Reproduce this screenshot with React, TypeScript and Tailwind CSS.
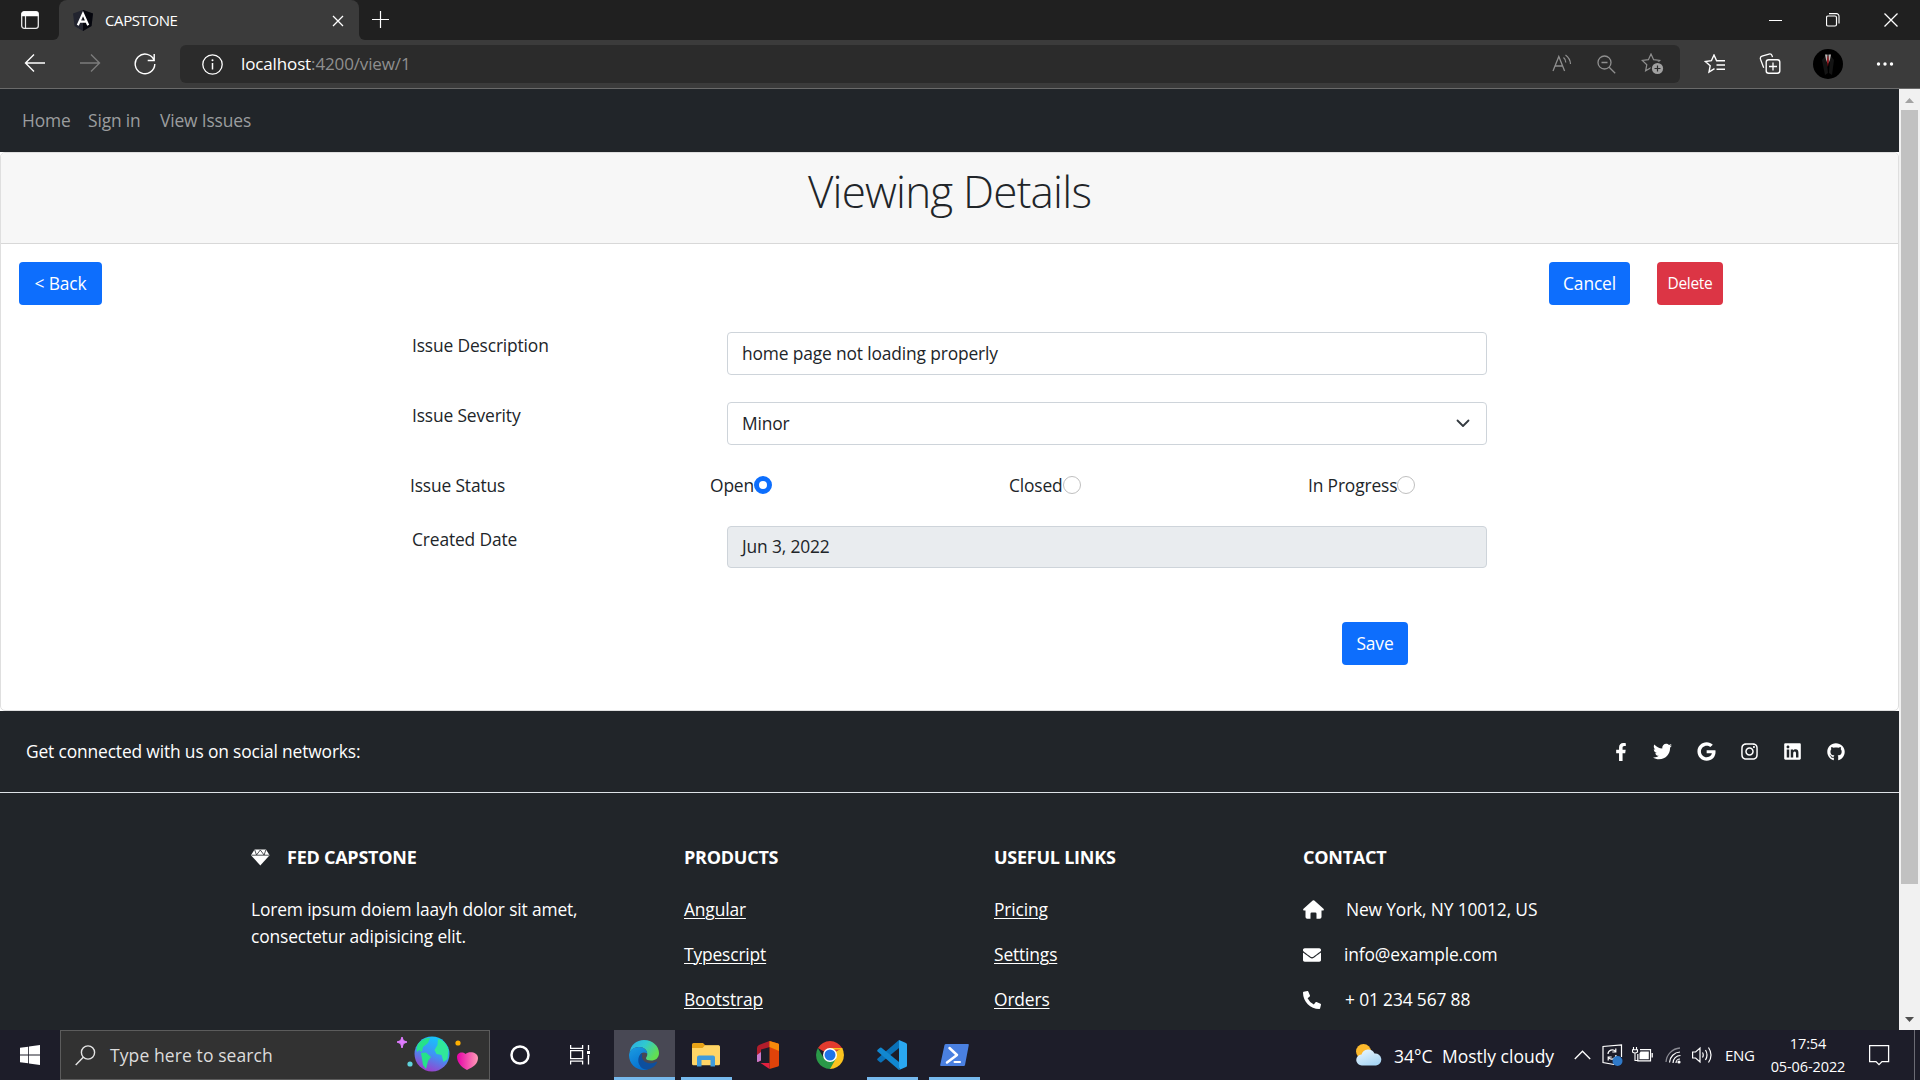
import React from "react";
import {
  FaFacebookF,
  FaTwitter,
  FaGoogle,
  FaInstagram,
  FaLinkedin,
  FaGithub,
  FaEnvelope,
  FaPhoneAlt,
} from "react-icons/fa";

/* ---------- Browser chrome ---------- */

function TitleBar() {
  return (
    <div className="flex h-10 bg-[#3b3b3b] text-white">
      <div className="flex h-10 w-[59px] items-center justify-center rounded-br-md bg-[#202020]">
        <svg width="20" height="20" viewBox="0 0 20 20" fill="none">
          <rect x="1.7" y="1.7" width="16.6" height="16.6" rx="2.5" stroke="#e8e8e8" strokeWidth="1.3" />
          <path d="M1.5 4a2.5 2.5 0 0 1 2.500-2.500h12A2.500 2.500 0 0 1 18.500 4v2.200h-17z" fill="#fff" />
          <path d="M5.500 6v12" stroke="#e8e8e8" strokeWidth="1.200" />
        </svg>
      </div>
      <div className="flex w-[300px] bg-[#202020]">
        <div className="flex h-10 w-[300px] items-center rounded-t-lg bg-[#3b3b3b] pl-[14px]">
          <svg width="20" height="21" viewBox="0 0 20 21">
            <path d="M10 0L20 3.500 18.500 16 10 21 1.500 16 0 3.500z" fill="#22242f" />
            <path d="M10 0L20 3.500 18.500 16 10 21z" fill="#05060d" />
            <path d="M4.800 15.200L10 3.600l5.200 11.600M7 11.600h6" stroke="#fff" strokeWidth="2.200" fill="none" />
          </svg>
          <span className="ml-[12px] text-[15px] leading-5 tracking-[-0.4px]">CAPSTONE</span>
          <svg width="12" height="12" viewBox="0 0 12 12" className="ml-auto mr-[15px] mt-[1px]">
            <path d="M1 1l10 10M11 1L1 11" stroke="#fff" strokeWidth="1.300" />
          </svg>
        </div>
      </div>
      <div className="flex flex-1 rounded-bl-md bg-[#202020]">
        <svg width="18" height="18" viewBox="0 0 18 18" className="ml-[13px] mt-[11px]">
          <path d="M8.500 0v17M0 8.500h17" stroke="#fff" strokeWidth="1.200" />
        </svg>
        <div className="ml-auto flex items-center pr-[22px]">
          <svg width="14" height="14" viewBox="0 0 14 14">
            <path d="M0 7.500h13" stroke="#fff" />
          </svg>
          <svg width="14" height="14" viewBox="0 0 14 14" fill="none" className="ml-[43px]">
            <rect x="0.500" y="3" width="10" height="10" rx="1.500" stroke="#fff" strokeWidth="1.200" />
            <path d="M3 .6h7.500a2.500 2.500 0 0 1 2.500 2.500v7.500" stroke="#fff" strokeWidth="1.100" />
          </svg>
          <svg width="14" height="14" viewBox="0 0 14 14" className="ml-[44px]">
            <path d="M.5.5l13 13M13.500.5l-13 13" stroke="#fff" strokeWidth="1.300" />
          </svg>
        </div>
      </div>
    </div>
  );
}

const star = "M10 1l2.600 5.700 6.100.8-4.500 4.200 1.200 6.100L10 14.800l-5.400 3 1.200-6.100L1.300 7.500l6.100-.8z";

function Toolbar() {
  return (
    <div className="flex h-12 items-center bg-[#3b3b3b] text-white">
      <svg width="22" height="20" viewBox="0 0 22 20" fill="none" className="ml-[24px] mt-[-2px]">
        <path d="M21 10H1.500M10 1.500L1.500 10l8.500 8.500" stroke="#fff" strokeWidth="1.400" />
      </svg>
      <svg width="22" height="20" viewBox="0 0 22 20" fill="none" className="ml-[33px] mt-[-2px]">
        <path d="M1 10h19.500M12 1.500l8.500 8.500-8.500 8.500" stroke="#7c7c7c" strokeWidth="1.400" />
      </svg>
      <svg width="22" height="22" viewBox="0 0 22 22" fill="none" className="ml-[33px]">
        <path d="M20.200 7.500A9.800 9.800 0 1 0 20.800 11M20.200 1v6.500h-6.500" stroke="#fff" strokeWidth="1.400" />
      </svg>
      <div className="ml-[24px] flex h-[38px] w-[1500px] items-center rounded-md bg-[#2b2b2b] pl-[22px] pr-[16px]">
        <svg width="21" height="21" viewBox="0 0 21 21" fill="none">
          <circle cx="10.500" cy="10.500" r="9.700" stroke="#fff" strokeWidth="1.300" />
          <path d="M10.500 9v6.500" stroke="#fff" strokeWidth="1.500" />
          <circle cx="10.500" cy="6.300" r="1" fill="#fff" />
        </svg>
        <span className="ml-[18px] text-[17px] leading-6 tracking-[-0.13px]">
          localhost<span className="text-[#8f8f8f]">:4200/view/1</span>
        </span>
        <svg width="20" height="18" viewBox="0 0 20 18" fill="none" className="ml-auto mb-[2px]">
          <path d="M1 17L6.800 2.500 12.600 17M3 12h7.700" stroke="#8f8f8f" strokeWidth="1.300" />
          <path d="M11.500 3.500c1.500 1.200 2.300 3 2.300 5M13.500 1c2.800 2 4.800 5 5 9" stroke="#8f8f8f" strokeWidth="1.200" />
        </svg>
        <svg width="19" height="19" viewBox="0 0 19 19" fill="none" className="ml-[25px]">
          <circle cx="7.500" cy="7.500" r="6.500" stroke="#8f8f8f" strokeWidth="1.300" />
          <path d="M4.500 7.500h6M12.200 12.200l6 6" stroke="#8f8f8f" strokeWidth="1.300" />
        </svg>
        <svg width="23" height="22" viewBox="0 0 23 22" fill="none" className="ml-[25px]">
          <path d={star} stroke="#8f8f8f" strokeWidth="1.200" />
          <circle cx="16.500" cy="15.500" r="7" fill="#2b2b2b" />
          <circle cx="16.500" cy="15.500" r="5.600" fill="#a0a0a0" />
          <path d="M16.500 12.500v6M13.500 15.500h6" stroke="#2b2b2b" strokeWidth="1.200" />
        </svg>
      </div>
      <svg width="22" height="20" viewBox="0 0 22 20" fill="none" className="ml-[24px]">
        <path d="M10.500 14.700L5 18l1.200-6.300-4.900-4.200 6.100-.8L10 1l2.600 5.700h8.400M12.500 11H21M12.500 15.200H21" stroke="#fff" strokeWidth="1.400" />
      </svg>
      <svg width="22" height="22" viewBox="0 0 22 22" fill="none" className="ml-[33px]">
        <path d="M4.700 14.800L1.500 6.300A2.500 2.500 0 0 1 3 3.200L10 1.100a2.500 2.500 0 0 1 3 1.500l.5 1.500" stroke="#fff" strokeWidth="1.300" />
        <rect x="7.200" y="6.700" width="13.600" height="13.600" rx="2.500" stroke="#fff" strokeWidth="1.400" />
        <path d="M14 9.500v8M10 13.500h8" stroke="#fff" strokeWidth="1.300" />
      </svg>
      <svg width="30" height="30" viewBox="0 0 30 30" className="ml-[32px]">
        <circle cx="15" cy="15" r="15" fill="#000" />
        <path d="M9 11l4-5 2 18-3 2zM21 11l-4-5-1 18 3 2z" fill="#141414" />
        <path d="M12 5.500l1 5 1.500 4v-9zM18 5.500l-1 5-1.500 4v-9z" fill="#b9b4b4" />
        <path d="M14.600 7l-.6 5 .9 6 .9-6-.5-5z" fill="#a3141c" />
      </svg>
      <svg width="18" height="6" viewBox="0 0 18 6" fill="#fff" className="ml-[33px]">
        <circle cx="2.500" cy="3" r="1.700" />
        <circle cx="9" cy="3" r="1.700" />
        <circle cx="15.500" cy="3" r="1.700" />
      </svg>
    </div>
  );
}

/* ---------- Page ---------- */

function IssueForm() {
  const status = [
    { label: "Open", checked: true },
    { label: "Closed", checked: false },
    { label: "In Progress", checked: false },
  ];
  return (
    <main className="h-[559px] rounded-[5px] border border-[#dfdfdf] bg-white">
      <header className="flex h-[91px] justify-center rounded-t-[4px] border-b border-[#d8d8d8] bg-[#f7f7f7] pt-[8px]">
        <h1 className="text-[44px] font-light leading-[60px] tracking-[-0.8px]">Viewing Details</h1>
      </header>
      <div className="flex h-[61px] pl-[18px] pt-[18px] text-white">
        <button className="h-[43px] w-[83px] rounded bg-[#0d6efd]">&lt; Back</button>
        <button className="ml-[1447px] h-[43px] w-[81px] rounded bg-[#0d6efd]">Cancel</button>
        <button className="ml-[27px] h-[43px] w-[66px] rounded bg-[#dc3545] text-[15.5px] tracking-[-0.3px]">Delete</button>
      </div>
      <div className="flex flex-col gap-[27px] pl-[411px] pt-[27px]">
        <label className="flex">
          <span className="w-[315px]">Issue Description</span>
          <span className="flex h-[43px] w-[760px] items-center rounded border border-[#ced4da] px-[14px]">
            home page not loading properly
          </span>
        </label>
        <label className="flex">
          <span className="w-[315px]">Issue Severity</span>
          <span className="flex h-[43px] w-[760px] items-center justify-between rounded border border-[#ced4da] pl-[14px] pr-[16px]">
            Minor
            <svg width="14" height="9" viewBox="0 0 14 9" fill="none">
              <path d="M1.500 1.500L7 7l5.500-5.500" stroke="#343a40" strokeWidth="1.800" strokeLinecap="round" strokeLinejoin="round" />
            </svg>
          </span>
        </label>
        <div className="flex h-[27px]">
          <span className="ml-[-2px] w-[300px]">Issue Status</span>
          {status.map((s) => (
            <label key={s.label} className="flex w-[299px]">
              {s.label}
              {s.checked ? (
                <span className="mt-[4px] size-[18px] rounded-full border-[5px] border-[#0d6efd] bg-white" />
              ) : (
                <span className="mt-[4px] size-[18px] rounded-full border border-[#bfbfbf] bg-white" />
              )}
            </label>
          ))}
        </div>
        <label className="flex">
          <span className="w-[315px]">Created Date</span>
          <span className="flex h-[42px] w-[760px] items-center rounded border border-[#ced4da] bg-[#e9ecef] px-[14px] pb-[1px]">
            Jun 3, 2022
          </span>
        </label>
      </div>
      <button className="ml-[1341px] mt-[54px] h-[43px] w-[66px] rounded bg-[#0d6efd] text-white">Save</button>
    </main>
  );
}

function ColumnTitle({ children }: { children: React.ReactNode }) {
  return (
    <h6 className="flex items-center text-[18px] font-bold leading-[27px] tracking-[-0.25px]">{children}</h6>
  );
}

function LinkColumn({ title, links, width }: { title: string; links: string[]; width: string }) {
  return (
    <div className={width}>
      <ColumnTitle>{title}</ColumnTitle>
      <ul className="mt-[25px] flex flex-col gap-[18px]">
        {links.map((l) => (
          <li key={l} className="h-[27px] underline decoration-1 underline-offset-2">{l}</li>
        ))}
      </ul>
    </div>
  );
}

function GemIcon() {
  return (
    <svg width="19" height="17" viewBox="0 0 19 17" fill="#fff" className="mr-[17px]">
      <path d="M3.600 .5H15L18.600 6.300 9.300 16.500 0 6.300z" />
      <path d="M.5 6.200H18.200M5.500 6L9.300 1l3.800 5M3.700.8L5.500 6M14.900.8L13.100 6" stroke="#212529" strokeWidth="0.800" fill="none" />
    </svg>
  );
}

function HouseIcon() {
  return (
    <svg width="21" height="19" viewBox="0 0 21 19" fill="#fff" className="mr-[22px]">
      <path d="M9.700.5q.8-.7 1.600 0l9.200 8.200q.5.600.3 1.200-.3.600-1 .6h-1.300V17q0 1.700-1.700 1.700h-3.300v-4.900q0-1.200-1.200-1.200H8.700q-1.200 0-1.200 1.200v4.900H4.200q-1.700 0-1.700-1.700v-6.500H1.200q-.7 0-1-.6-.2-.6.300-1.200z" />
    </svg>
  );
}

function Footer() {
  return (
    <footer className="h-[319px] overflow-hidden bg-[#212529] text-white">
      <div className="flex h-[82px] items-center border-b border-[#dee2e6] pl-[26px] pr-[54px]">
        <span>Get connected with us on social networks:</span>
        <div className="ml-auto flex items-center">
          <FaFacebookF size={18} className="mr-[23px]" />
          <FaTwitter size={19} className="mr-[25px]" />
          <FaGoogle size={19} className="mr-[24px]" />
          <FaInstagram size={19} className="mr-[24px]" />
          <FaLinkedin size={19} className="mr-[25px]" />
          <FaGithub size={18} />
        </div>
      </div>
      <div className="flex pl-[251px] pt-[51px]">
        <div className="w-[433px]">
          <ColumnTitle>
            <GemIcon />
            FED CAPSTONE
          </ColumnTitle>
          <p className="mt-[25px] w-[345px]">Lorem ipsum doiem laayh dolor sit amet, consectetur adipisicing elit.</p>
        </div>
        <LinkColumn width="w-[310px]" title="PRODUCTS" links={["Angular", "Typescript", "Bootstrap"]} />
        <LinkColumn width="w-[309px]" title="USEFUL LINKS" links={["Pricing", "Settings", "Orders"]} />
        <div>
          <ColumnTitle>CONTACT</ColumnTitle>
          <div className="mt-[25px] flex flex-col gap-[18px]">
            <p className="flex h-[27px] items-center"><HouseIcon />New York, NY 10012, US</p>
            <p className="flex h-[27px] items-center"><FaEnvelope size={18} className="mr-[23px]" />info@example.com</p>
            <p className="flex h-[27px] items-center"><FaPhoneAlt size={18} className="mr-[24px]" />+ 01 234 567 88</p>
          </div>
        </div>
      </div>
    </footer>
  );
}

function ScrollBar() {
  return (
    <div className="flex w-[21px] flex-col items-center bg-[#f1f1f1]">
      <svg width="9" height="5" viewBox="0 0 9 5" className="mt-[9px]">
        <path d="M4.500 0L9 5H0z" fill="#a3a3a3" />
      </svg>
      <div className="mt-[7px] h-[774px] w-[17px] bg-[#c1c1c1]" />
      <svg width="9" height="5" viewBox="0 0 9 5" className="mt-auto mb-[8px]">
        <path d="M0 0h9L4.500 5z" fill="#505050" />
      </svg>
    </div>
  );
}

/* ---------- Taskbar ---------- */

function SearchArt() {
  return (
    <svg width="86" height="40" viewBox="0 0 86 40">
      <defs>
        <linearGradient id="globe" x1="0.700" y1="0" x2="0.300" y2="1">
          <stop offset="0" stopColor="#12c9fb" />
          <stop offset="0.500" stopColor="#3f93f5" />
          <stop offset="1" stopColor="#a338c8" />
        </linearGradient>
        <linearGradient id="heart" x1="0" y1="0" x2="1" y2="0">
          <stop offset="0" stopColor="#e600a8" />
          <stop offset="1" stopColor="#ff9bb5" />
        </linearGradient>
      </defs>
      <path d="M6 2l1.400 3.600L11 7l-3.600 1.600L6 13l-1.400-4.400L1 7l3.600-1.400z" fill="#e07bff" stroke="#e07bff" strokeWidth="1" />
      <circle cx="14" cy="29" r="2.600" fill="#5fd3dc" />
      <circle cx="36" cy="19" r="17.500" fill="url(#globe)" />
      <path d="M22 9c4-5 8-6 12-6l-2 5-5 4-1 5-3-2-2 2c-1-3 0-6 1-8zM25 18l5-.5 5 4.500-3 4-2 8-3-4-1-6z" fill="#25e28a" />
      <path d="M42 4c6 1 9 6 10.500 11l-1 9-4 3-2-7-5-1-2-4 3-5z" fill="#30e79a" />
      <circle cx="62" cy="8" r="2.600" fill="#ffb000" />
      <path d="M71 35c-6-3-10-8-10-13 0-4 5-6 8.500-3 3.500-3.500 12.500-2 12.500 4 0 6-5 9-11 12z" fill="url(#heart)" />
    </svg>
  );
}

function EdgeIcon() {
  return (
    <svg width="30" height="30" viewBox="0 0 30 30" className="mr-px">
      <defs>
        <linearGradient id="edgeTop" x1="0" y1="0" x2="1" y2="0.500">
          <stop offset="0" stopColor="#2aa8e8" />
          <stop offset="0.500" stopColor="#30c8d0" />
          <stop offset="1" stopColor="#62df52" />
        </linearGradient>
        <linearGradient id="edgeLeft" x1="0" y1="0" x2="0.500" y2="1">
          <stop offset="0" stopColor="#1b9de2" />
          <stop offset="1" stopColor="#0670cf" />
        </linearGradient>
      </defs>
      <path d="M.5 13C1.500 5 7.500 0 15 0c8.500 0 15 6 15 13 0 5-3.500 7.500-8 7.500-3 0-5-1-5-2.300 0-1 1.300-1.500 1.300-4C18.300 10 15 7 10 7 5.500 7 2 9.500.5 13z" fill="url(#edgeTop)" />
      <path d="M0 15C.5 10 5 7 10 7c5 0 8.300 3.500 8.300 6.500-5-3-8.300.5-8.300 5.500 0 5 4 9.500 9 10.500-1 .4-2.500.5-4 .5C6.500 30 0 23.500 0 15z" fill="url(#edgeLeft)" />
      <path d="M13 13.500C9.500 15 8.500 20 10 24c1.600 4 5 6 8.500 5.600C23 28.500 26.500 26 28 22.500c.3-.8-.3-1-1-.6-6 3.200-14 .5-14-5.400 0-1.200.3-2.200 0-3z" fill="#0d4f9e" />
    </svg>
  );
}

function ExplorerIcon() {
  return (
    <svg width="28" height="24" viewBox="0 0 28 24" className="mr-px">
      <path d="M0 1.500Q0 0 1.500 0h9.500l2.500 2.500H27V12H0z" fill="#e8a317" />
      <path d="M0 5h10.500L13 2.200h13.500Q28 2.200 28 3.700v17q0 1.500-1.500 1.500h-25Q0 22.200 0 20.700z" fill="#ffd566" />
      <path d="M5 23.500v-9q0-2 2-2h14q2 0 2 2v9h-4.500V17h-9v6.500z" fill="#3f9bdc" />
    </svg>
  );
}

function OfficeIcon() {
  return (
    <svg width="24" height="28" viewBox="0 0 24 28">
      <path d="M13.500 0L3 4Q1 5 1 7v13q0 1.500 1.300.8L5 19.500V8.500L14 6z" fill="#b11d2b" />
      <path d="M1 14v6q0 1.500 1.300.8L5 19.500V11z" fill="#c77acb" />
      <path d="M13.500 0L22 2.500q1 .4 1 1.500v20q0 1-1 1.500L13.500 28z" fill="#e0430a" />
      <path d="M13.500 0L22 2.500q1 .4 1 1.500v6l-9.500-4z" fill="#f58a0b" />
      <path d="M4.500 22h9v6z" fill="#e3203f" />
    </svg>
  );
}

function ChromeIcon() {
  return (
    <svg width="28" height="28" viewBox="0 0 28 28">
      <path d="M14 14L1.900 7A14 14 0 0 1 26.100 7z" fill="#e33b2e" />
      <path d="M14 14L26.100 7A14 14 0 0 1 14 28z" fill="#fcc31e" />
      <path d="M14 14l6 3.500L14 28A14 14 0 0 1 1.900 7L8 17.500z" fill="#2a9948" />
      <path d="M14 7h12.100a14 14 0 0 1 .7 1.500H14z" fill="#fcc31e" />
      <circle cx="14" cy="14" r="7" fill="#fff" />
      <circle cx="14" cy="14" r="5.500" fill="#1f73e8" />
    </svg>
  );
}

function CodeIcon() {
  return (
    <svg width="30" height="30" viewBox="0 0 30 30" className="mr-px">
      <path d="M22 0v8L4.500 22.300q-.8.600-1.500 0L.6 20.200q-.8-.8 0-1.600z" fill="#0a71b8" />
      <path d="M22 30v-8L4.500 7.700Q3.700 7.100 3 7.700L.6 9.800q-.8.800 0 1.600z" fill="#1187d0" />
      <path d="M22 0l7 3q1 .5 1 1.500v21q0 1-1 1.500l-7 3q1-1 0-2.500V2q0-1.500 0-2z" fill="#2aa7f0" />
    </svg>
  );
}

function PowerShellIcon() {
  return (
    <svg width="29" height="22" viewBox="0 0 29 22" className="mr-px">
      <path d="M6 0h22q1 0 .8 1L25 21q-.3 1-1 1H1q-1 0-.8-1L4.500 1Q4.800 0 6 0z" fill="#4a80e0" />
      <path d="M9.500 4l7.500 7L7 18.500" stroke="#fff" strokeWidth="2.500" fill="none" strokeLinecap="round" strokeLinejoin="round" />
      <path d="M14.500 18h5.500" stroke="#fff" strokeWidth="2" strokeLinecap="round" />
    </svg>
  );
}

function TaskbarApp({ children, bar, active }: { children: React.ReactNode; bar?: boolean; active?: boolean }) {
  return (
    <div className={active ? "flex h-full w-[61px] flex-col bg-[#484854]" : "flex h-full w-[51px] flex-col"}>
      <div className="flex h-[47px] items-center justify-center pt-[3px]">{children}</div>
      {bar && <div className="h-[3px] bg-[#76b9ed]" />}
    </div>
  );
}

function Taskbar() {
  return (
    <div className="flex h-[50px] items-center bg-[#1d1d29] text-white">
      <svg width="20" height="20" viewBox="0 0 20 20" fill="#fff" className="ml-[20px] mr-[20px]">
        <path d="M0 2.800l8.200-1.100v7.900H0zM9 1.600L20 0v9.600H9zM0 10.400h8.200v7.900L0 17.200zM9 10.400h11V20L9 18.400z" />
      </svg>
      <div className="flex h-[50px] w-[430px] items-center border border-[#5c5c5c] bg-[#323232] pl-[14px]">
        <svg width="21" height="21" viewBox="0 0 21 21" fill="none">
          <circle cx="13" cy="7.500" r="6.600" stroke="#e6e6e6" strokeWidth="1.400" />
          <path d="M8.300 12.300L.7 20" stroke="#e6e6e6" strokeWidth="1.400" />
        </svg>
        <span className="ml-[14px] mt-[1px] text-[17.500px] tracking-[0.1px] text-[#dcdcdc]">Type here to search</span>
        <div className="ml-auto mr-[7px] mt-[-1px]"><SearchArt /></div>
      </div>
      <svg width="20" height="20" viewBox="0 0 20 20" fill="none" className="ml-[20px]">
        <circle cx="10" cy="10" r="8.500" stroke="#fff" strokeWidth="2.500" />
      </svg>
      <svg width="21" height="20" viewBox="0 0 21 20" fill="none" className="ml-[40px]" stroke="#fff" strokeWidth="1.300">
        <path d="M.6 0v3.300h12V0M.6 19.500v-3.300h12v3.300M.6 5.700h12v8H.6zM18.500 0v5M18.500 10v9.500" />
        <path d="M18.500 6v3" strokeWidth="3" />
      </svg>
      <div className="ml-[23px] flex h-full">
        <TaskbarApp active bar><EdgeIcon /></TaskbarApp>
        <div className="w-[6px]" />
        <TaskbarApp bar><ExplorerIcon /></TaskbarApp>
        <div className="w-[10px]" />
        <TaskbarApp><OfficeIcon /></TaskbarApp>
        <div className="w-[11px]" />
        <TaskbarApp><ChromeIcon /></TaskbarApp>
        <div className="w-[12px]" />
        <TaskbarApp bar><CodeIcon /></TaskbarApp>
        <div className="w-[11px]" />
        <TaskbarApp bar><PowerShellIcon /></TaskbarApp>
      </div>
      <svg width="26" height="22" viewBox="0 0 26 22" className="ml-auto shrink-0">
        <defs>
          <linearGradient id="cloud" x1="0" y1="0" x2="0.600" y2="1">
            <stop offset="0" stopColor="#eef8ff" />
            <stop offset="1" stopColor="#a9d6f5" />
          </linearGradient>
        </defs>
        <circle cx="7.500" cy="7.500" r="7.500" fill="#fdb92c" />
        <path d="M6 21.500a5.500 5.500 0 0 1-.5-11A7 7 0 0 1 18.500 9.500 6 6 0 1 1 20 21.500z" fill="url(#cloud)" />
      </svg>
      <span className="ml-[12px] mt-[2px] w-[48px] text-[17.500px]">34°C</span>
      <span className="mt-[2px] w-[132px] whitespace-nowrap text-[17.500px]">Mostly cloudy</span>
      <svg width="17" height="10" viewBox="0 0 17 10" fill="none">
        <path d="M.8 9L8.500 1.200 16.200 9" stroke="#fff" strokeWidth="1.300" />
      </svg>
      <svg width="21" height="22" viewBox="0 0 21 22" fill="none" className="ml-[11px]">
        <path d="M12 20.500L1 18.500v-16L19.500 1v12" stroke="#fff" strokeWidth="1.200" />
        <path d="M6 10a4.200 4.200 0 0 1 7.500-2.500M13.800 4.500v3.500h-3.500M14 11a4.200 4.200 0 0 1-7.500 2.500M6.200 16.500V13h3.500" stroke="#fff" strokeWidth="1.200" />
        <circle cx="15.500" cy="17" r="5" fill="#2f79c8" />
      </svg>
      <svg width="21" height="16" viewBox="0 0 21 16" fill="none" className="ml-[9px]">
        <path d="M1.500 0v2.500M4.500 0v2.500M.5 2.800h5v2.200q-2.500 2-5 0zM3 6v7.500h3" stroke="#fff" strokeWidth="1.100" />
        <path d="M8 2.600h10.500v11.300H5.800V7" stroke="#fff" strokeWidth="1.200" />
        <path d="M8.500 4.500h8.300v7.700H7.500V6.500z" fill="#fff" />
        <path d="M20.200 6v4.500" stroke="#fff" strokeWidth="1.300" />
      </svg>
      <svg width="17" height="18" viewBox="0 0 17 18" fill="none" className="ml-[12px]">
        <path d="M1 16A15 15 0 0 1 15 2" stroke="#8b8b93" strokeWidth="1.300" />
        <path d="M4.500 16.500A11 11 0 0 1 15 6M8 17A7.500 7.500 0 0 1 15.500 9.500M11 17a4 4 0 0 1 4-4" stroke="#fff" strokeWidth="1.200" />
        <circle cx="14" cy="16" r="1.600" fill="#fff" />
      </svg>
      <svg width="21" height="18" viewBox="0 0 21 18" fill="none" className="ml-[10px]" stroke="#fff" strokeWidth="1.200">
        <path d="M.6 6v6h3L8 16V2L3.600 6zM10.500 6.500q1.500 2.500 0 5M13.500 4q3 5 0 10M16.500 1.500q5 7.500 0 15" />
      </svg>
      <span className="ml-[12px] mt-[1px] w-[32px] text-[15px] tracking-[-0.3px]">ENG</span>
      <div className="ml-[10px] flex w-[82px] flex-col items-center whitespace-nowrap text-[14.500px] leading-[23px] tracking-[-0.1px]">
        <span>17:54</span>
        <span>05-06-2022</span>
      </div>
      <svg width="21" height="21" viewBox="0 0 21 21" fill="none" className="ml-[20px]">
        <path d="M.6.6h19v16h-6.600L10 19.600 7 16.600H.6z" stroke="#fff" strokeWidth="1.300" />
      </svg>
      <div className="ml-[24px] h-full w-[6px] border-l border-[#6b6b74]" />
    </div>
  );
}

export default function App() {
  return (
    <div className="flex h-[1080px] w-[1920px] flex-col overflow-hidden bg-[#202020] font-['Open_Sans','Noto_Sans',sans-serif]">
      <TitleBar />
      <Toolbar />
      <div className="flex h-[942px] border-t border-[#6a6a6a] bg-[#212529]">
        <div className="w-[1899px] bg-white text-[17.400px] leading-[27px] tracking-[-0.15px] text-[#212529]">
          <nav className="flex h-[63px] items-center bg-[#212529] pl-[22px] text-[#9b9d9f]">
            <a className="w-[66px]">Home</a>
            <a className="w-[72px]">Sign in</a>
            <a>View Issues</a>
          </nav>
          <IssueForm />
          <Footer />
        </div>
        <ScrollBar />
      </div>
      <Taskbar />
    </div>
  );
}
